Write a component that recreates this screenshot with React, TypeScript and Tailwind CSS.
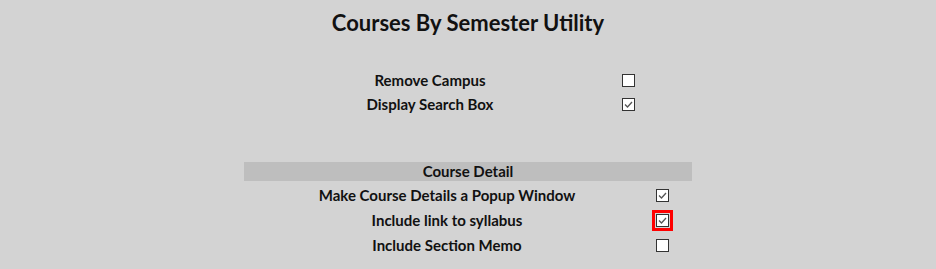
import React from "react";

function Box({ checked, focus }: { checked?: boolean; focus?: boolean }) {
  return (
    <span
      className={`inline-flex h-[13px] w-[13px] items-center justify-center border border-[#333] bg-white ${
        focus ? "outline-[3px] outline-solid outline-[#ff0000] outline-offset-[1px]" : ""
      }`}
    >
      {checked ? (
        <svg viewBox="0 0 11 11" className="h-[11px] w-[11px]">
          <path d="M2 5.5 L4.5 8 L9 3" fill="none" stroke="#555" strokeWidth="1.3" />
        </svg>
      ) : null}
    </span>
  );
}

function Row({
  label,
  w,
  h,
  checked,
  focus,
}: {
  label: string;
  w: string;
  h: string;
  checked?: boolean;
  focus?: boolean;
}) {
  return (
    <div className={`flex ${h} items-center`}>
      <div className={`${w} text-center`}>{label}</div>
      <div className="flex flex-1 items-center pl-[6px]">
        <Box checked={checked} focus={focus} />
      </div>
    </div>
  );
}

export default function App() {
  return (
    <div
      className="h-[269px] w-[936px] bg-[#d3d3d3] text-[#111] font-bold"
      style={{ fontFamily: "Lato, 'Open Sans', sans-serif" }}
    >
      <h1 className="pt-[9px] text-center text-[22px] leading-[28px]">Courses By Semester Utility</h1>

      {/* general options */}
      <div className="mx-auto mt-[31px] w-[448px] text-[15px]">
        <Row label="Remove Campus" w="w-[372px]" h="h-[24px]" />
        <Row label="Display Search Box" w="w-[372px]" h="h-[24px]" checked />
      </div>

      {/* course detail */}
      <div className="mx-auto mt-[46px] w-[448px] text-[15px]">
        <div className="h-[19px] bg-[#bebebe] text-center leading-[19px]">Course Detail</div>
        <div className="mt-[2px]">
          <Row label="Make Course Details a Popup Window" w="w-[406px]" h="h-[25px]" checked />
          <Row label="Include link to syllabus" w="w-[406px]" h="h-[25px]" checked focus />
          <Row label="Include Section Memo" w="w-[406px]" h="h-[25px]" />
        </div>
      </div>
    </div>
  );
}
